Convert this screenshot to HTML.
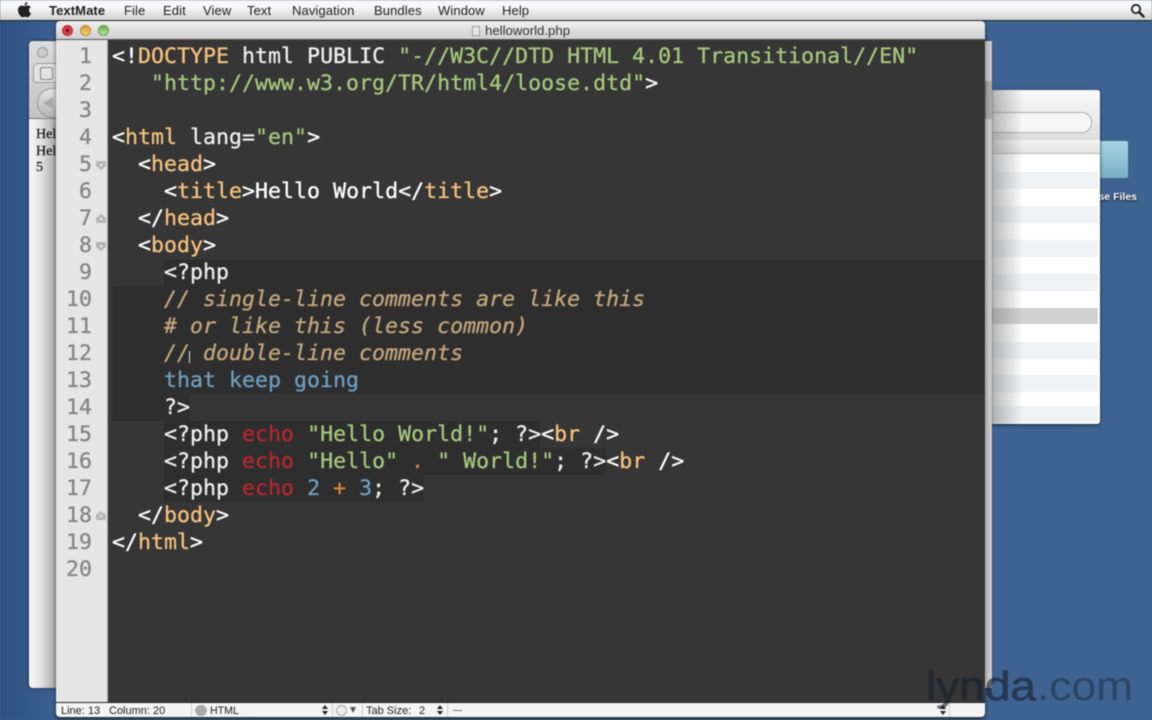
<!DOCTYPE html>
<html><head><meta charset="utf-8"><title>helloworld.php</title>
<style>
html,body{margin:0;padding:0;width:1152px;height:720px;overflow:hidden;background:#3c6090}
#all{position:absolute;left:0;top:0;width:1152px;height:720px;overflow:hidden;filter:blur(.4px)}
div,span{box-sizing:border-box}
.a{position:absolute}
#desk{left:0;top:0;width:1152px;height:720px;background:linear-gradient(90deg,#2f5283 0,#3c6090 60px,#3f6391 100%)}
#menu{left:0;top:0;width:1152px;height:21px;background:linear-gradient(#f4f4f4,#fafafa 30%,#d2d2d2);border-bottom:1px solid #222}
#menu span{position:absolute;top:3px;font:13px/15px "Liberation Sans",sans-serif;color:#222;letter-spacing:.1px}
#back{left:29px;top:41px;width:962px;height:647px;background:linear-gradient(90deg,#fafafa,#e2e2e2 12px,#a8a8a8 27px);border-radius:4px;box-shadow:0 0 3px #123}
#code,#nums{font:21.55px/27px "DejaVu Sans Mono",monospace;letter-spacing:.03px;white-space:pre;-webkit-text-stroke:.3px currentColor}
#code{left:112px;top:43px;color:#f0f0f0}
#nums{left:56px;top:43px;width:36px;text-align:right;color:#858585;letter-spacing:0}
.t{color:#f6c27e}.s{color:#a6c77c}.w{color:#fff}.c{color:#c4a67c;font-style:italic}.b{color:#6f9fc0}.r{color:#b4282e}.o{color:#d98a3c}
.fold{position:absolute;left:96px;width:10px;height:9px}
.st{position:absolute;top:705px;font:11px/13px "Liberation Sans",sans-serif;color:#222}
.row{position:absolute;left:992px;width:106px;height:17px;background:#eff2f5}
.sep{position:absolute;top:703px;width:1px;height:14px;background:#ccc}
</style></head><body><div id="all">
<div id="desk" class="a"></div>

<!-- folder + label -->
<div class="a" style="left:1090px;top:141px;width:38px;height:37px;background:linear-gradient(#a9d4e2,#78b0c6);border-radius:2px"></div>
<div class="a" style="left:1090px;top:190px;font:bold 10.5px/14px 'Liberation Sans',sans-serif;color:#fff;text-shadow:0 1px 2px #000;white-space:nowrap;width:47px;text-align:right">se Files</div>

<!-- finder window -->
<div class="a" style="left:985px;top:90px;width:115px;height:334px;background:#fff;border-radius:3px;box-shadow:0 1px 3px #123"></div>
<div class="a" style="left:985px;top:90px;width:115px;height:50px;background:linear-gradient(#fafafa,#dedede);border-radius:3px 3px 0 0"></div>
<div class="a" style="left:985px;top:112px;width:107px;height:21px;background:#f7f7f7;border:1px solid #aaa;border-left:0;border-radius:0 10px 10px 0"></div>
<div class="a" style="left:985px;top:140px;width:115px;height:14px;background:linear-gradient(#f4f4f4,#e2e2e2);border-bottom:1px solid #bbb"></div>
<div class="row" style="top:172px"></div>
<div class="row" style="top:206px"></div>
<div class="row" style="top:240px"></div>
<div class="row" style="top:274px"></div>
<div class="row" style="top:308px;background:#d2d2d2;height:16px"></div>
<div class="row" style="top:342px"></div>
<div class="row" style="top:375px"></div>
<div class="row" style="top:406px;height:16px"></div>
<div class="a" style="left:991px;top:90px;width:32px;height:334px;background:linear-gradient(90deg,rgba(120,120,120,.55),rgba(255,255,255,0))"></div>

<!-- back browser window -->
<div id="back" class="a"></div>
<div class="a" style="left:29px;top:41px;width:27px;height:78px;background:linear-gradient(#dcdcdc,#c4c4c4);border-bottom:1px solid #777;border-radius:4px 0 0 0"></div>
<div class="a" style="left:37px;top:47px;width:11px;height:11px;border:1px solid #999;border-radius:50%;background:#ccc"></div>
<div class="a" style="left:33px;top:63px;width:23px;height:20px;background:#e2e2e2;border:1px solid #999;border-right:0;border-radius:5px 0 0 3px"></div>
<div class="a" style="left:40px;top:67px;width:13px;height:13px;border:1px dotted #333;border-radius:2px"></div>
<div class="a" style="left:37px;top:88px;width:19px;height:30px;background:linear-gradient(#e4e4e4,#b4b4b4);border:1px solid #999;border-right:0;border-radius:15px 0 0 15px"></div>
<div class="a" style="left:43px;top:97px;width:0;height:0;border:6px solid transparent;border-right:10px solid #aaa;border-left:0"></div>
<div class="a" style="left:29px;top:119px;width:27px;height:569px;background:linear-gradient(90deg,#fafafa,#e2e2e2 12px,#a8a8a8);border-radius:0 0 0 4px"></div>
<div class="a" style="left:36px;top:127px;width:20px;overflow:hidden;font:14px/16.5px 'Liberation Serif',serif;color:#111;white-space:nowrap;-webkit-text-stroke:.2px #111">Hello<br>Hello<br>5</div>
<div class="a" style="left:985px;top:41px;width:7px;height:647px;background:#c8c8c8;border-left:1px solid #e8e8e8"></div>
<div class="a" style="left:985px;top:81px;width:7px;height:38px;background:#a8a8a8"></div>

<!-- main window -->
<div class="a" style="left:56px;top:21px;width:929px;height:697px;background:#363636;border-radius:4px;box-shadow:0 1px 4px rgba(0,0,0,.6)"></div>
<div class="a" style="left:56px;top:21px;width:929px;height:19px;background:linear-gradient(#f0f0f0,#cfcfcf);border-radius:4px 4px 0 0;border-bottom:1px solid #555"></div>
<div class="a" style="left:62px;top:25px;width:11px;height:11px;border-radius:50%;background:radial-gradient(circle at 50% 50%,#7a1020 0,#7a1020 25%,#e0404c 35%,#d83a46);border:1px solid #a33"></div>
<div class="a" style="left:80px;top:25px;width:11px;height:11px;border-radius:50%;background:linear-gradient(#d89a3a,#f5d070);border:1px solid #b98a30"></div>
<div class="a" style="left:98px;top:25px;width:11px;height:11px;border-radius:50%;background:linear-gradient(#6cb04c,#b8e898);border:1px solid #6a9a50"></div>
<div class="a" style="left:472px;top:26px;width:8px;height:10px;background:#e8e8e8;border:1px solid #999"></div>
<div class="a" style="left:485px;top:23px;font:13.2px/15px 'Liberation Sans',sans-serif;color:#333;white-space:nowrap">helloworld.php</div>

<!-- gutter -->
<div class="a" style="left:56px;top:40px;width:52px;height:662px;background:#e6e6e6;border-right:1px solid #aaa"></div>
<!-- highlight areas -->
<div class="a" style="left:164px;top:260px;width:821px;height:134px;background:#2e2e2e;border-top:1px solid #2a2a2a"></div>
<div class="a" style="left:112px;top:286px;width:52px;height:135px;background:#2e2e2e"></div>
<div class="a" style="left:164px;top:394px;width:26px;height:27px;background:#2e2e2e"></div>
<div class="a" style="left:164px;top:421px;width:376px;height:27px;background:#2e2e2e"></div>
<div class="a" style="left:164px;top:448px;width:442px;height:27px;background:#2e2e2e"></div>
<div class="a" style="left:164px;top:475px;width:260px;height:27px;background:#2e2e2e"></div>

<div id="nums" class="a">1
2
3
4
5
6
7
8
9
10
11
12
13
14
15
16
17
18
19
20</div>
<svg class="fold" style="top:161px" viewBox="0 0 10 9"><path d="M1 0h8q1 0 1 1v4l-5 4-5-4V1q0-1 1-1z" fill="#b4b4b4"/><path d="M3 3h4L5 6z" fill="#e6e6e6"/></svg>
<svg class="fold" style="top:214px" viewBox="0 0 10 9"><path d="M5 0l5 4v4q0 1-1 1H1q-1 0-1-1V4z" fill="#b4b4b4"/><path d="M3 6h4L5 3z" fill="#e6e6e6"/></svg>
<svg class="fold" style="top:242px" viewBox="0 0 10 9"><path d="M1 0h8q1 0 1 1v4l-5 4-5-4V1q0-1 1-1z" fill="#b4b4b4"/><path d="M3 3h4L5 6z" fill="#e6e6e6"/></svg>
<svg class="fold" style="top:511px" viewBox="0 0 10 9"><path d="M5 0l5 4v4q0 1-1 1H1q-1 0-1-1V4z" fill="#b4b4b4"/><path d="M3 6h4L5 3z" fill="#e6e6e6"/></svg>

<div id="code" class="a"><span class="w">&lt;!</span><span class="t">DOCTYPE</span> html PUBLIC <span class="s">"-//W3C//DTD HTML 4.01 Transitional//EN"</span>
   <span class="s">"http://www.w3.org/TR/html4/loose.dtd"</span><span class="w">&gt;</span>

<span class="w">&lt;</span><span class="t">html</span> lang=<span class="s">"en"</span><span class="w">&gt;</span>
  <span class="w">&lt;</span><span class="t">head</span><span class="w">&gt;</span>
    <span class="w">&lt;</span><span class="t">title</span><span class="w">&gt;Hello World&lt;/</span><span class="t">title</span><span class="w">&gt;</span>
  <span class="w">&lt;/</span><span class="t">head</span><span class="w">&gt;</span>
  <span class="w">&lt;</span><span class="t">body</span><span class="w">&gt;</span>
    &lt;?php
    <span class="c">// single-line comments are like this</span>
    <span class="c"># or like this (less common)</span>
    <span class="c">// double-line comments</span>
    <span class="b">that keep going</span>
    ?&gt;
    &lt;?php <span class="r">echo</span> <span class="s">"Hello World!"</span>; ?&gt;<span class="w">&lt;</span><span class="t">br</span> <span class="w">/&gt;</span>
    &lt;?php <span class="r">echo</span> <span class="s">"Hello"</span> <span class="o">.</span> <span class="s">" World!"</span>; ?&gt;<span class="w">&lt;</span><span class="t">br</span> <span class="w">/&gt;</span>
    &lt;?php <span class="r">echo</span> <span class="b">2</span> <span class="o">+</span> <span class="b">3</span>; ?&gt;
  <span class="w">&lt;/</span><span class="t">body</span><span class="w">&gt;</span>
<span class="w">&lt;/</span><span class="t">html</span><span class="w">&gt;</span>
</div>

<!-- status bar -->
<div class="a" style="left:56px;top:702px;width:929px;height:15px;background:#f4f4f4;border-top:1px solid #222;border-radius:0 0 4px 4px"></div>
<span class="st" style="left:61px">Line: 13</span>
<span class="st" style="left:109px">Column: 20</span>
<div class="sep" style="left:191px"></div>
<div class="a" style="left:195px;top:705px;width:12px;height:11px;border-radius:50%;background:#aaa"></div>
<span class="st" style="left:210px;font-size:10.6px">HTML</span>
<div class="a" style="left:322px;top:705px;width:0;height:0;border:3px solid transparent;border-bottom:4px solid #222;border-top:0"></div>
<div class="a" style="left:322px;top:711px;width:0;height:0;border:3px solid transparent;border-top:4px solid #222;border-bottom:0"></div>
<div class="sep" style="left:332px"></div>
<div class="a" style="left:336px;top:705px;width:11px;height:11px;border-radius:50%;border:1px solid #aaa;background:#eee"></div>
<div class="a" style="left:350px;top:707px;width:0;height:0;border:3px solid transparent;border-top:6px solid #555;border-bottom:0"></div>
<div class="sep" style="left:362px"></div>
<span class="st" style="left:366px">Tab Size:</span>
<span class="st" style="left:419px">2</span>
<div class="a" style="left:437px;top:705px;width:0;height:0;border:3px solid transparent;border-bottom:4px solid #222;border-top:0"></div>
<div class="a" style="left:437px;top:711px;width:0;height:0;border:3px solid transparent;border-top:4px solid #222;border-bottom:0"></div>
<div class="sep" style="left:447px"></div>
<div class="a" style="left:453px;top:710px;width:9px;height:1px;background:#777"></div>
<div class="sep" style="left:949px"></div>
<div class="a" style="left:940px;top:705px;width:0;height:0;border:3px solid transparent;border-bottom:4px solid #222;border-top:0"></div>
<div class="a" style="left:940px;top:711px;width:0;height:0;border:3px solid transparent;border-top:4px solid #222;border-bottom:0"></div>

<!-- I-beam cursor -->
<div class="a" style="left:189px;top:351px;width:1px;height:12px;background:#eee;box-shadow:0 0 1px #000"></div>

<!-- menu bar -->
<div id="menu" class="a">
<svg class="a" style="left:17px;top:2px" width="15" height="16" viewBox="0 0 15 16"><path fill="#222" d="M7.6 4.2C8.6 3.5 9 3.5 10.6 3.5c1.300 0 2.400.6 3.100 1.600-1.100.7-1.800 1.700-1.800 3 0 1.500.9 2.600 2.100 3.100-.7 1.900-2.100 4-3.500 4-.9 0-1.300-.5-2.400-.5s-1.500.5-2.400.5C3.900 15.200 1 11.600 1 8.200c0-2.900 1.900-4.700 3.900-4.700 1.200 0 2 .7 2.700.7zM7.500 3.300C7.400 1.700 8.600.3 10.300 0c.2 1.700-1.200 3.300-2.800 3.300z"/></svg>
<span style="left:49px;font-weight:bold">TextMate</span>
<span style="left:124px">File</span>
<span style="left:163px">Edit</span>
<span style="left:203px">View</span>
<span style="left:247px">Text</span>
<span style="left:292px">Navigation</span>
<span style="left:374px">Bundles</span>
<span style="left:438px">Window</span>
<span style="left:502px">Help</span>
<svg class="a" style="left:1130px;top:3px" width="15" height="15" viewBox="0 0 15 15"><circle cx="6" cy="6" r="4.200" fill="none" stroke="#222" stroke-width="1.800"/><path d="M9 9l4.500 4.500" stroke="#222" stroke-width="2.400" stroke-linecap="round"/></svg>
</div>

<!-- watermark -->
<svg class="a" style="left:920px;top:660px" width="225" height="55" viewBox="0 0 225 55">
<text x="6" y="40" font-family="Liberation Sans,sans-serif" font-size="41" fill="#16202c" fill-opacity=".62" stroke="#16202c" stroke-opacity=".35" stroke-width="1" textLength="110" lengthAdjust="spacingAndGlyphs">lynda</text>
<text x="117" y="40" font-family="Liberation Sans,sans-serif" font-size="41" fill="#16283c" fill-opacity=".5" textLength="96" lengthAdjust="spacingAndGlyphs">.com</text>
</svg>
</div></body></html>
